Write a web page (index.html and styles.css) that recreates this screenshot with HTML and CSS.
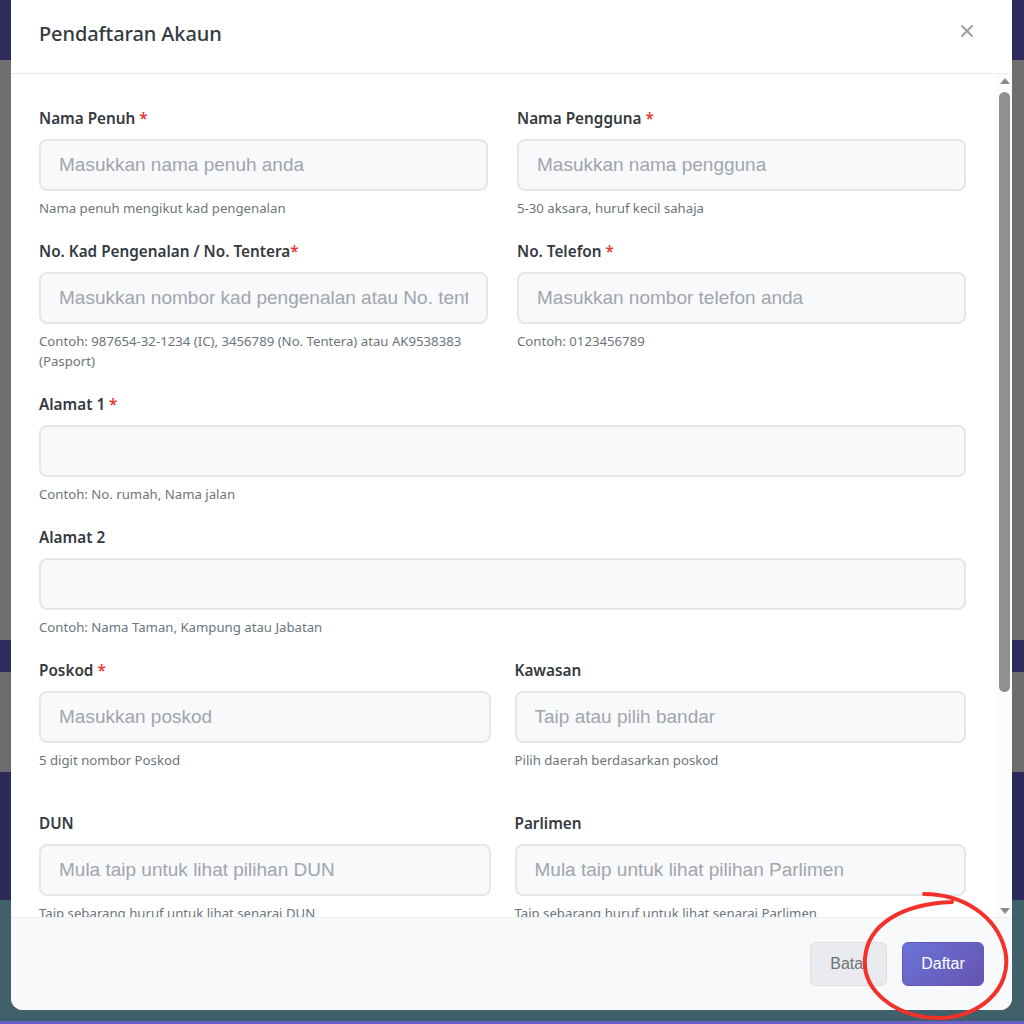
FILE: index.html
```html
<!DOCTYPE html>
<html lang="ms">
<head>
<meta charset="utf-8">
<title>Pendaftaran Akaun</title>
<link rel="stylesheet" href="styles.css">
</head>
<body>
<div class="backdrop">
  <div class="modal">
    <header class="modal-header">
      <h2 class="modal-title">Pendaftaran Akaun</h2>
      <button class="close" aria-label="Tutup">
        <svg width="12" height="12" viewBox="0 0 12 12"><path d="M1 1L11 11M11 1L1 11" stroke="#9ba1a8" stroke-width="2" stroke-linecap="round"/></svg>
      </button>
    </header>
    <div class="modal-body">
      <div class="form-scroll">
        <div class="grid grid-a">
          <div class="field">
            <label class="label">Nama Penuh <span class="req">*</span></label>
            <input class="input" type="text" placeholder="Masukkan nama penuh anda">
            <div class="help">Nama penuh mengikut kad pengenalan</div>
          </div>
          <div class="field">
            <label class="label">Nama Pengguna <span class="req">*</span></label>
            <input class="input" type="text" placeholder="Masukkan nama pengguna">
            <div class="help">5-30 aksara, huruf kecil sahaja</div>
          </div>
          <div class="field">
            <label class="label">No. Kad Pengenalan / No. Tentera<span class="req">*</span></label>
            <input class="input" type="text" placeholder="Masukkan nombor kad pengenalan atau No. tentera">
            <div class="help">Contoh: 987654-32-1234 (IC), 3456789 (No. Tentera) atau AK9538383 (Pasport)</div>
          </div>
          <div class="field">
            <label class="label">No. Telefon <span class="req">*</span></label>
            <input class="input" type="text" placeholder="Masukkan nombor telefon anda">
            <div class="help">Contoh: 0123456789</div>
          </div>
        </div>
        <div class="field">
          <label class="label">Alamat 1 <span class="req">*</span></label>
          <input class="input" type="text">
          <div class="help">Contoh: No. rumah, Nama jalan</div>
        </div>
        <div class="field">
          <label class="label">Alamat 2</label>
          <input class="input" type="text">
          <div class="help">Contoh: Nama Taman, Kampung atau Jabatan</div>
        </div>
        <div class="grid grid-b">
          <div class="field">
            <label class="label">Poskod <span class="req">*</span></label>
            <input class="input" type="text" placeholder="Masukkan poskod">
            <div class="help">5 digit nombor Poskod</div>
          </div>
          <div class="field">
            <label class="label">Kawasan</label>
            <input class="input" type="text" placeholder="Taip atau pilih bandar">
            <div class="help">Pilih daerah berdasarkan poskod</div>
          </div>
        </div>
        <div class="grid grid-b section-gap">
          <div class="field">
            <label class="label">DUN</label>
            <input class="input" type="text" placeholder="Mula taip untuk lihat pilihan DUN">
            <div class="help">Taip sebarang huruf untuk lihat senarai DUN</div>
          </div>
          <div class="field">
            <label class="label">Parlimen</label>
            <input class="input" type="text" placeholder="Mula taip untuk lihat pilihan Parlimen">
            <div class="help">Taip sebarang huruf untuk lihat senarai Parlimen</div>
          </div>
        </div>
      </div>
      <div class="scrollbar">
        <span class="arrow arrow-up"></span>
        <div class="track"><div class="thumb"></div></div>
        <span class="arrow arrow-down"></span>
      </div>
    </div>
    <footer class="modal-footer">
      <button class="btn btn-secondary">Batal</button>
      <button class="btn btn-primary">Daftar</button>
    </footer>
  </div>
  <svg class="annotation" width="1024" height="1024" viewBox="0 0 1024 1024">
    <path d="M924 894 C962 894 996 915 1005 950 C1014 990 976 1020 935 1018 C894 1016 862 990 865 958 C868 924 902 904 952 902" fill="none" stroke="#f2312b" stroke-width="4" stroke-linecap="round"/>
  </svg>
</div>
</body>
</html>
```
FILE: styles.css
```css
* { box-sizing: border-box; }
html, body { margin: 0; padding: 0; }
body { width: 1024px; height: 1024px; overflow: hidden; }

.backdrop {
  position: relative;
  width: 1024px;
  height: 1024px;
  padding-left: 11px;
  background:
    linear-gradient(to bottom,
      #2d2b5a 0, #2d2b5a 60px,
      #6f6f70 60px, #6f6f70 640px,
      #2e2c5e 640px, #2e2c5e 672px,
      #6c6c6e 672px, #6c6c6e 772px,
      #2c2a5b 772px, #2c2a5b 900px,
      #40606a 900px, #40606a 1021px,
      #6a5fc8 1021px);
}

.modal {
  width: 1001px;
  height: 1010px;
  background: #ffffff;
  border-radius: 0 0 12px 12px;
  display: flex;
  flex-direction: column;
  overflow: hidden;
  font-family: "Noto Sans", "Open Sans", sans-serif;
}

.modal-header {
  height: 74px;
  flex: none;
  display: flex;
  align-items: center;
  justify-content: space-between;
  padding: 0 39px 7px 28px;
  border-bottom: 1px solid #e8eaee;
}
.modal-title {
  margin: 0;
  font-size: 20px;
  font-weight: 500;
  color: #343a40;
  letter-spacing: -0.1px;
}
.close {
  border: 0;
  background: transparent;
  padding: 0;
  width: 12px;
  height: 12px;
  display: flex;
  margin-top: -5px;
}

.modal-body {
  flex: 1;
  display: flex;
  min-height: 0;
}
.form-scroll {
  flex: 1;
  overflow: hidden;
  padding: 33px 29px 0 28px;
}

.grid {
  display: grid;
  grid-template-columns: 1fr 1fr;
}
.grid-a { column-gap: 29px; }
.grid-b { column-gap: 24px; }
.section-gap { margin-top: 20px; }

.field { margin-bottom: 22px; }
.label {
  display: block;
  height: 22px;
  line-height: 22px;
  font-size: 15.3px;
  font-weight: 600;
  color: #343a40;
  margin-bottom: 10px;
}
.req { color: #e53935; }

.input {
  display: block;
  width: 100%;
  height: 52px;
  border: 2px solid #e3e6ea;
  border-radius: 8px;
  background: #f8f9fb;
  padding: 0 18px;
  font-family: "Liberation Sans", Arial, sans-serif;
  font-size: 19px;
  color: #343a40;
  outline: none;
}
.input::placeholder { color: #a1a5ac; }

.help {
  margin-top: 7px;
  font-size: 13.2px;
  line-height: 20px;
  color: #6c757d;
}

.scrollbar {
  width: 17px;
  flex: none;
  background: #fbfbfb;
  display: flex;
  flex-direction: column;
  align-items: center;
  padding: 4px 0 3px 2px;
}
.arrow {
  width: 0;
  height: 0;
  border-left: 5px solid transparent;
  border-right: 5px solid transparent;
  flex: none;
}
.arrow-up { border-bottom: 6px solid #8a8a8a; }
.arrow-down { border-top: 6px solid #8a8a8a; }
.track {
  flex: 1;
  width: 100%;
  padding: 8px 1px 0 1px;
  display: flex;
  justify-content: center;
}
.thumb {
  width: 11px;
  height: 600px;
  background: #909090;
  border-radius: 6px;
}

.modal-footer {
  height: 93px;
  flex: none;
  background: #f8f9fb;
  border-top: 1px solid #eceef1;
  display: flex;
  align-items: center;
  justify-content: flex-end;
  gap: 15px;
  padding: 0 28px 1px;
}
.btn {
  height: 44px;
  border-radius: 6px;
  font-family: "Liberation Sans", Arial, sans-serif;
  font-size: 16px;
  padding: 0;
}
.btn-secondary {
  width: 77px;
  background: #e9ebee;
  border: 1px solid #dadde2;
  color: #6c737a;
}
.btn-primary {
  width: 82px;
  border: 1px solid #6358b8;
  background: linear-gradient(135deg, #6b73d8 0%, #6654b0 100%);
  color: #ffffff;
}

.annotation {
  position: absolute;
  left: 0;
  top: 0;
  pointer-events: none;
}
```
